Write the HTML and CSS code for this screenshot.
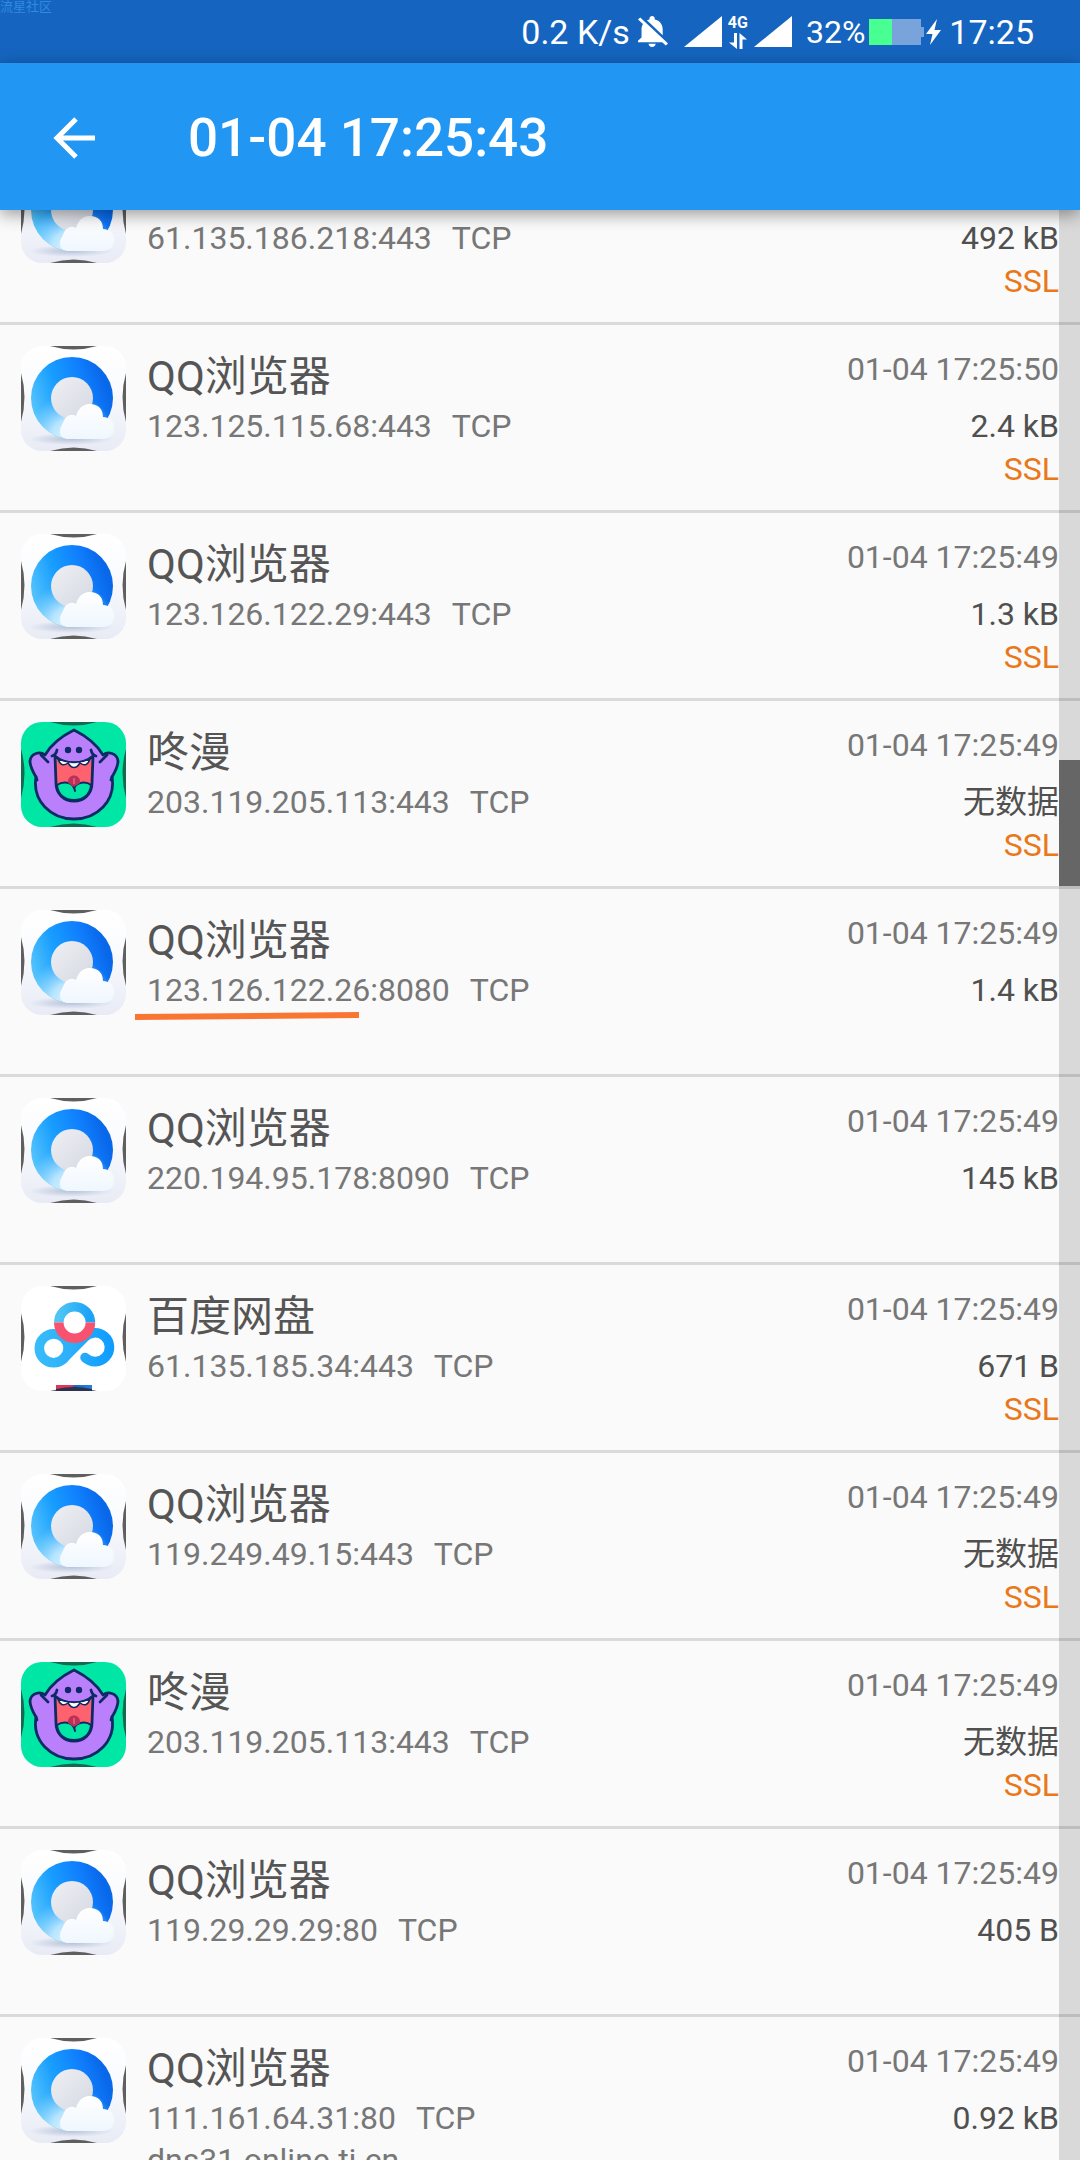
FILE: index.html
```html
<!DOCTYPE html>
<html lang="zh-CN">
<head>
<meta charset="utf-8">
<meta name="viewport" content="width=device-width, initial-scale=1">
<title>01-04 17:25:43</title>
<link rel="stylesheet" href="styles.css">
</head>
<body>
<svg class="sprite" width="0" height="0" aria-hidden="true">
  <defs>
    <clipPath id="tile"><rect width="105" height="105" rx="21"/></clipPath>
    <linearGradient id="qq-bg" x1="0" y1="0" x2="0" y2="1"><stop offset="0" stop-color="#fff"/><stop offset=".4" stop-color="#fafbfe"/><stop offset="1" stop-color="#e8ebf5"/></linearGradient>
    <linearGradient id="qq-ring" gradientUnits="userSpaceOnUse" x1="12" y1="75" x2="88" y2="50"><stop offset="0" stop-color="#5cc8fc"/><stop offset=".4" stop-color="#189eff"/><stop offset=".75" stop-color="#107ffd"/><stop offset="1" stop-color="#0968ea"/></linearGradient>
    <radialGradient id="qq-fade" gradientUnits="userSpaceOnUse" cx="50" cy="92" r="44"><stop offset="0" stop-color="#eefaff"/><stop offset=".45" stop-color="#cdeeff" stop-opacity=".85"/><stop offset="1" stop-color="#9fdcff" stop-opacity="0"/></radialGradient>
    <linearGradient id="qq-hole" x1="0" y1="0" x2="1" y2="1"><stop offset="0" stop-color="#eff0f4"/><stop offset="1" stop-color="#d5d8e2"/></linearGradient>
    <linearGradient id="qq-cloud" x1="0" y1="0" x2="0" y2="1"><stop offset="0" stop-color="#fff"/><stop offset="1" stop-color="#eff7fe"/></linearGradient>
    <radialGradient id="qq-shade"><stop offset="0" stop-color="#9fb0cc" stop-opacity=".7"/><stop offset="1" stop-color="#9fb0cc" stop-opacity="0"/></radialGradient>
    <linearGradient id="pan-a" x1="0" y1="0" x2="1" y2="0"><stop offset="0" stop-color="#4ec5f5"/><stop offset="1" stop-color="#1ba3f6"/></linearGradient>
    <linearGradient id="pan-b" gradientUnits="userSpaceOnUse" x1="14" y1="62" x2="93" y2="62"><stop offset="0" stop-color="#38bdf8"/><stop offset=".5" stop-color="#2aaefa"/><stop offset="1" stop-color="#0d9bff"/></linearGradient>
    <linearGradient id="pan-strip"><stop offset=".45" stop-color="#d93a5c"/><stop offset=".5" stop-color="#1766c0"/><stop offset="1" stop-color="#2b80dc"/></linearGradient>
    <path id="edges" d="M29 0H76Q53 7 29 0ZM29 105H76Q53 98 29 105ZM0 27V76Q7 51 0 27ZM105 27V76Q98 51 105 27Z"/>
  </defs>
  <symbol id="app-qq" viewBox="0 0 105 105">
    <g clip-path="url(#tile)">
      <rect width="105" height="105" fill="url(#qq-bg)"/>
      <ellipse cx="50" cy="93" rx="42" ry="6" fill="url(#qq-shade)"/>
      <circle cx="51" cy="52" r="41" fill="url(#qq-ring)"/>
      <circle cx="51" cy="52" r="41" fill="url(#qq-fade)"/>
      <circle cx="51" cy="52" r="21" fill="url(#qq-hole)"/>
      <path d="M46 93C38 92 37 84 42 77C44 70 50 67 55 70C58 60 64 58 69 58C77 58 82 63 82 71C89 71 93 76 93 82C93 89 88 93 82 93Z" fill="url(#qq-cloud)"/>
      <use href="#edges" fill="#5f5f5f"/>
    </g>
  </symbol>
  <symbol id="app-dong" viewBox="0 0 105 105">
    <g clip-path="url(#tile)">
      <rect width="105" height="105" fill="#00e6a4"/>
      <use href="#edges" fill="#126b50"/>
      <g stroke="#0d2a66" stroke-width="2.8" stroke-linejoin="round" stroke-linecap="round">
        <path fill="#ba80fc" d="M53 8C43 13 31 21 24 33C19 29 10 31 9 39C9 45 12 50 15 55C11 79 30 97 53 97C76 97 95 79 91 55C94 50 97 45 97 39C96 31 87 29 82 33C75 21 63 13 53 8Z"/>
        <path fill="none" d="M20 33L27 40M86 33L79 40M15 55L16 58M91 55L90 58"/>
        <path fill="#ff626f" d="M34 34C44 43 62 43 72 34L71 61C71 72 63 79 53 79C43 79 35 72 35 61Z"/>
        <path fill="#00e6a4" stroke-width="2" d="M36 63C42 59 51 60 53 66C56 60 65 59 70 63C69 73 62 78 53 78C44 78 37 73 36 63Z"/>
        <path fill="none" d="M31 34Q35 33 36 28M75 34Q71 33 70 28"/>
        <path fill="none" stroke-width="2" d="M53 65L54 69"/>
      </g>
      <path fill="#b83259" d="M47 61C46 51 60 51 59 61L53 65Z"/>
      <path stroke="#e8556c" stroke-width="2" d="M53 56V62"/>
      <path fill="#fff" stroke="#0d2a66" stroke-width="1.500" stroke-linejoin="round" d="M37 37Q40 46 47 41Q53 50 59 41Q66 46 69 37Q53 44 37 37Z"/>
      <circle cx="47" cy="28" r="3.200" fill="#0d2a66"/><circle cx="58" cy="28" r="3.200" fill="#0d2a66"/>
    </g>
  </symbol>
  <symbol id="app-pan" viewBox="0 0 105 105">
    <g clip-path="url(#tile)">
      <rect width="105" height="105" fill="#fff"/>
      <g fill="none" stroke="url(#pan-b)" stroke-width="9.6" stroke-linecap="round">
        <circle cx="32.7" cy="62.3" r="14.4"/>
        <path d="M42 73L63 52A14.4 14.4 0 1 1 64 71.500"/>
      </g>
      <path d="M37.8 36.500A15.8 15.8 0 0 1 69.400 36.500" fill="none" stroke="url(#pan-a)" stroke-width="9.6"/>
      <path d="M37.8 36.500A15.8 15.8 0 1 0 69.400 36.500" fill="none" stroke="#f7526f" stroke-width="9.6"/>
      <rect x="35" y="99" width="36" height="6" fill="url(#pan-strip)"/>
      <use href="#edges" fill="#5f5f5f"/>
      <path d="M35 103Q53 99 71 103V105H35Z" fill="#1a2348" opacity=".75"/>
    </g>
  </symbol>
</svg>

<div class="screen">
  <div class="status-bar">
    <span class="watermark">流星社区</span>
    <span class="status-text">0.2 K/s</span>
    <svg class="bell" viewBox="4 2.5 17 19.5" preserveAspectRatio="none" aria-hidden="true"><path fill="#fff" d="M20 18.69L7.84 6.14 5.27 3.49 4 4.76l2.8 2.8v.01c-.52.99-.8 2.16-.8 3.42v5l-2 2v1h13.73l2 2L21 19.73l-1-1.04zM12 22c1.11 0 2-.89 2-2h-4c0 1.11.89 2 2 2zm6-7.32V11c0-3.08-1.64-5.64-4.5-6.32V4c0-.83-.67-1.5-1.5-1.500s-1.500.67-1.500 1.500v.68c-.15.03-.29.08-.42.12-.1.03-.2.07-.3.11h-.01c-.01 0-.01 0-.02.01-.23.09-.46.2-.68.31 0 0-.01 0-.01.01L18 14.68z"/></svg>
    <div class="signals">
      <svg class="signal" viewBox="0 0 38 31" aria-hidden="true"><path fill="#fff" d="M38 0V31H0Z"/></svg>
      <div class="network">
        <span class="network-type">4G</span>
        <svg class="network-data" viewBox="0 0 18 16" aria-hidden="true"><path fill="#fff" d="M5 0H8V16L0 9.500H5ZM10.500 16V0L18 6.500H13.500V16Z"/></svg>
      </div>
      <svg class="signal" viewBox="0 0 38 31" aria-hidden="true"><path fill="#fff" d="M38 0V31H0Z"/></svg>
    </div>
    <span class="status-percent">32%</span>
    <svg class="battery" viewBox="0 0 76 26" aria-hidden="true"><path fill="#78a4db" d="M23 0H52V8H55V18H52V26H23Z"/><path fill="#48ff91" d="M0 0H23V26H0Z"/><path fill="#fff" d="M68 0L57 15H63.500L61 26L72 11H65.500Z"/></svg>
    <span class="status-text">17:25</span>
  </div>

  <header class="app-bar">
    <button class="back" type="button" aria-label="返回"><svg viewBox="0 0 42 42" aria-hidden="true"><path d="M23 2L4 21L23 40M4 21H42" fill="none" stroke="#fff" stroke-width="5"/></svg></button>
    <h1 class="title">01-04 17:25:43</h1>
  </header>

  <main class="viewport">
    <ul class="list">
      <li class="row"><svg class="app-icon" aria-hidden="true"><use href="#app-qq"/></svg>
        <div class="info"><span class="name">QQ浏览器</span><span class="address"><span>61.135.186.218:443</span><span>TCP</span></span></div>
        <div class="meta"><span class="time">01-04 17:25:50</span><span class="size">492 kB</span><span class="ssl">SSL</span></div></li>
      <li class="row"><svg class="app-icon" aria-hidden="true"><use href="#app-qq"/></svg>
        <div class="info"><span class="name">QQ浏览器</span><span class="address"><span>123.125.115.68:443</span><span>TCP</span></span></div>
        <div class="meta"><span class="time">01-04 17:25:50</span><span class="size">2.4 kB</span><span class="ssl">SSL</span></div></li>
      <li class="row"><svg class="app-icon" aria-hidden="true"><use href="#app-qq"/></svg>
        <div class="info"><span class="name">QQ浏览器</span><span class="address"><span>123.126.122.29:443</span><span>TCP</span></span></div>
        <div class="meta"><span class="time">01-04 17:25:49</span><span class="size">1.3 kB</span><span class="ssl">SSL</span></div></li>
      <li class="row"><svg class="app-icon" aria-hidden="true"><use href="#app-dong"/></svg>
        <div class="info"><span class="name">咚漫</span><span class="address"><span>203.119.205.113:443</span><span>TCP</span></span></div>
        <div class="meta"><span class="time">01-04 17:25:49</span><span class="size">无数据</span><span class="ssl">SSL</span></div></li>
      <li class="row"><svg class="app-icon" aria-hidden="true"><use href="#app-qq"/></svg>
        <div class="info"><span class="name">QQ浏览器</span><span class="address marked"><span>123.126.122.26:8080</span><span>TCP</span><svg class="marker" viewBox="0 0 224 8" aria-hidden="true"><path d="M0 2L224 0V6L0 8Z" fill="#f97632"/></svg></span></div>
        <div class="meta"><span class="time">01-04 17:25:49</span><span class="size">1.4 kB</span></div></li>
      <li class="row"><svg class="app-icon" aria-hidden="true"><use href="#app-qq"/></svg>
        <div class="info"><span class="name">QQ浏览器</span><span class="address"><span>220.194.95.178:8090</span><span>TCP</span></span></div>
        <div class="meta"><span class="time">01-04 17:25:49</span><span class="size">145 kB</span></div></li>
      <li class="row"><svg class="app-icon" aria-hidden="true"><use href="#app-pan"/></svg>
        <div class="info"><span class="name">百度网盘</span><span class="address"><span>61.135.185.34:443</span><span>TCP</span></span></div>
        <div class="meta"><span class="time">01-04 17:25:49</span><span class="size">671 B</span><span class="ssl">SSL</span></div></li>
      <li class="row"><svg class="app-icon" aria-hidden="true"><use href="#app-qq"/></svg>
        <div class="info"><span class="name">QQ浏览器</span><span class="address"><span>119.249.49.15:443</span><span>TCP</span></span></div>
        <div class="meta"><span class="time">01-04 17:25:49</span><span class="size">无数据</span><span class="ssl">SSL</span></div></li>
      <li class="row"><svg class="app-icon" aria-hidden="true"><use href="#app-dong"/></svg>
        <div class="info"><span class="name">咚漫</span><span class="address"><span>203.119.205.113:443</span><span>TCP</span></span></div>
        <div class="meta"><span class="time">01-04 17:25:49</span><span class="size">无数据</span><span class="ssl">SSL</span></div></li>
      <li class="row"><svg class="app-icon" aria-hidden="true"><use href="#app-qq"/></svg>
        <div class="info"><span class="name">QQ浏览器</span><span class="address"><span>119.29.29.29:80</span><span>TCP</span></span></div>
        <div class="meta"><span class="time">01-04 17:25:49</span><span class="size">405 B</span></div></li>
      <li class="row"><svg class="app-icon" aria-hidden="true"><use href="#app-qq"/></svg>
        <div class="info"><span class="name">QQ浏览器</span><span class="address"><span>111.161.64.31:80</span><span>TCP</span></span><span class="address">dns31.online.tj.cn</span></div>
        <div class="meta"><span class="time">01-04 17:25:49</span><span class="size">0.92 kB</span></div></li>
    </ul>
    <div class="scroll-track" aria-hidden="true"><div class="scroll-thumb"></div></div>
  </main>
</div>
</body>
</html>
```

FILE: styles.css
```css
* { box-sizing: border-box; }

body {
  margin: 0;
  background: #fafafa;
  font-family: Roboto, "Noto Sans CJK SC", sans-serif;
  font-size: 32px;
}

.sprite { position: absolute; }

.screen {
  display: flex;
  flex-direction: column;
  height: 100vh;
  overflow: hidden;
}

/* System status bar */
.status-bar {
  position: relative;
  flex: none;
  display: flex;
  align-items: center;
  justify-content: flex-end;
  gap: 4px;
  height: 63px;
  padding-right: 46px;
  background: #1565c0;
  color: #fff;
}

.watermark {
  position: absolute;
  top: 0;
  left: 0;
  font-size: 13px;
  line-height: 14px;
  color: #2f8ae0;
}

.status-text { font-size: 34px; line-height: 40px; }
.status-percent { font-size: 32px; line-height: 40px; }
.bell { width: 30px; height: 31px; margin-left: 4px; }

.signals {
  display: flex;
  align-items: center;
  gap: 6px;
  margin: 0 10px 0 12px;
}

.signal { display: block; width: 38px; height: 31px; }

.network {
  display: flex;
  flex-direction: column;
  align-items: center;
  gap: 2px;
}

.network-type { font-size: 16px; font-weight: 700; line-height: 16px; }
.network-data { display: block; width: 18px; height: 16px; }
.battery { width: 76px; height: 26px; }

/* App bar */
.app-bar {
  position: relative;
  z-index: 2;
  flex: none;
  display: flex;
  align-items: center;
  gap: 72px;
  height: 147px;
  padding: 2px 32px 0;
  background: #2196f3;
  box-shadow: 0 4px 16px rgba(0, 0, 0, .4);
  color: #fff;
}

.back {
  width: 84px;
  height: 84px;
  padding: 21px;
  border: 0;
  background: none;
}

.back svg { display: block; width: 42px; height: 42px; }

.title { margin: 0; font-size: 53px; font-weight: 500; line-height: 64px; }

/* Connection list, scrolled part of the way into its first row */
.viewport {
  position: relative;
  flex: 1;
  min-height: 0;
  overflow: hidden;
}

.list { margin: -73px 0 0; padding: 0; list-style: none; }

.row {
  display: flex;
  gap: 21px;
  min-height: 188px;
  padding: 21px 21px 19px;
  border-bottom: 3px solid #dadada;
}

.app-icon { flex: none; width: 105px; height: 105px; }

.info {
  flex: 1;
  display: flex;
  flex-direction: column;
  min-width: 0;
  padding-top: 3px;
}

.name { font-size: 42px; line-height: 56px; color: #555; }

.address {
  display: flex;
  gap: 20px;
  line-height: 42px;
  color: #777;
}

.marked { position: relative; }

.marker {
  position: absolute;
  left: -12px;
  top: 43px;
  width: 224px;
  height: 8px;
}

.meta {
  display: flex;
  flex-direction: column;
  align-items: flex-end;
  line-height: 43px;
  white-space: nowrap;
}

.time { margin-bottom: 13px; line-height: 46px; color: #777; }
.size { color: #505050; }
.ssl { color: #e8781a; }

.scroll-track {
  position: absolute;
  top: 0;
  right: 0;
  bottom: 0;
  width: 21px;
  padding-top: 550px;
  background: rgba(0, 0, 0, .13);
}

.scroll-thumb { height: 126px; background: #666; }
```
